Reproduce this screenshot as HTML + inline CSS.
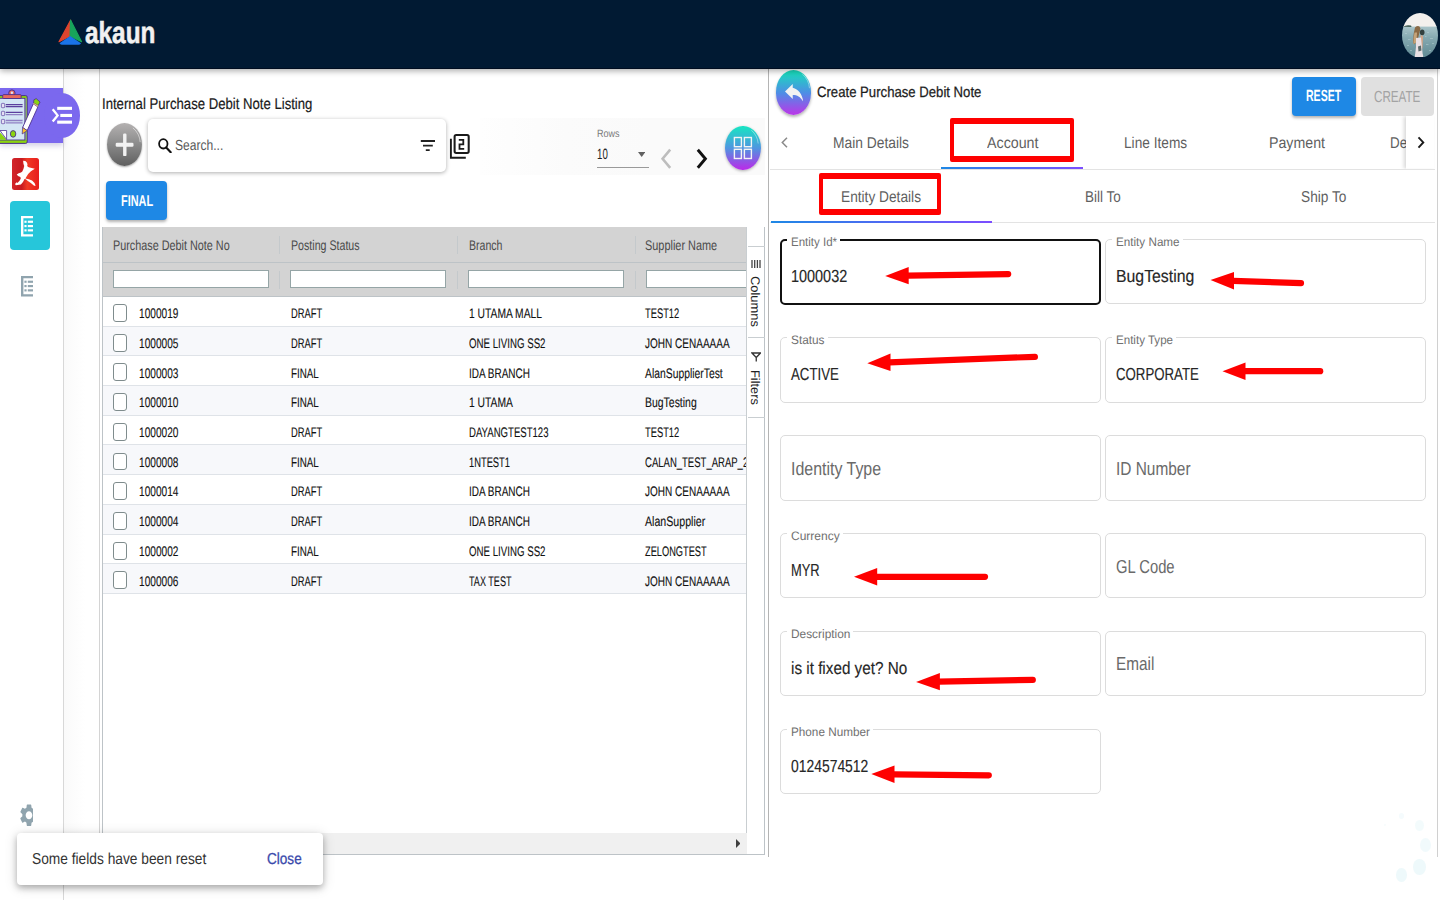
<!DOCTYPE html>
<html lang="en"><head><meta charset="utf-8"><title>Create Purchase Debit Note</title>
<style>
html,body{margin:0;padding:0;}
body{width:1440px;height:900px;overflow:hidden;position:relative;background:#fff;font-family:"Liberation Sans",sans-serif;}
body div,body svg,body span{position:absolute;display:block;}
.t{white-space:nowrap;line-height:1;transform-origin:0 0;text-rendering:geometricPrecision;}
.v{white-space:nowrap;line-height:1;transform-origin:0 0;text-rendering:geometricPrecision;}
</style></head>
<body>
<div style="left:0px;top:68px;width:63px;height:832px;background:#fff;border-right:1px solid #d8d8d8;"></div>
<div style="left:64px;top:68px;width:35px;height:787px;background:linear-gradient(90deg,#fafafa,#fff 60%);border-right:1px solid #d4d4d4;"></div>
<div style="left:0px;top:88.3px;width:63px;height:55px;background:#7b68ee;box-shadow:0 3px 5px rgba(90,80,160,.25);"></div>
<div style="left:44px;top:93.3px;width:36px;height:44.7px;background:#7b68ee;border-radius:50%;"></div>
<svg style="left:50px;top:105px;" width="24" height="21" viewBox="50 105 24 21" preserveAspectRatio="none"><g fill="#fff"><rect x="57.200" y="106.800" width="14.800" height="3.100"/><rect x="60.300" y="113.900" width="11.700" height="3.100"/><rect x="57.200" y="120.600" width="14.800" height="3.100"/></g><path d="M52.700 109.300 L57.600 115.400 L52.700 121.500" fill="none" stroke="#fff" stroke-width="2.300"/></svg>
<svg style="left:0px;top:88px;" width="42" height="56" viewBox="0 88 42 56" preserveAspectRatio="none"><rect x="-3" y="95.600" width="30.200" height="47.800" rx="1.500" fill="#8bd40f" stroke="#4b2e91" stroke-width="1"/><rect x="24.600" y="98" width="1.900" height="42" fill="#8fb08f"/><rect x="-3" y="98.300" width="27.900" height="41.700" fill="#d4e6f5" stroke="#4b2e91" stroke-width=".9"/><circle cx="11.900" cy="93.100" r="3.200" fill="#e8695d" stroke="#4b2e91" stroke-width="1"/><circle cx="11.900" cy="92.800" r="1.200" fill="#dfe3f3"/><rect x="2.700" y="94.600" width="18.500" height="3.900" rx="1" fill="#e8695d" stroke="#4b2e91" stroke-width=".9"/><g stroke="#5b3f9e" stroke-width="1.300"><path d="M5.800 104.700H22.600M5.800 106.700H22.600M5.800 112.300H22.600"/></g><g stroke="#8f80c4" stroke-width="1.300"><path d="M5.800 114.700H22.600M5.800 120.500H22.600M5.800 122.800H22.600"/></g><g fill="#e4e0f4" stroke="#6a52a8" stroke-width=".8"><rect x="1.400" y="103.400" width="3.300" height="4.300" rx=".8"/><rect x="1.400" y="111.300" width="3.300" height="4.300" rx=".8"/><rect x="1.400" y="119.400" width="3.300" height="4.300" rx=".8"/></g><ellipse cx="13.100" cy="133.900" rx="2.700" ry="3.300" fill="#8bd40f" stroke="#4b2e91" stroke-width=".9"/><path d="M-1 131.500 L6.600 139.700 L-1 139.700Z" fill="#8bd40f"/><path d="M0 130.500 L6.600 130.500 L6.600 139.500Z" fill="#fff" stroke="#4b2e91" stroke-width=".8"/><path d="M33.300 103.800 L37.900 106.900 L27.200 130.600 L22.600 127.500Z" fill="#fff" stroke="#4b2e91" stroke-width=".9"/><path d="M33.900 99.800 L36.200 98.600 L40.100 102 L38.100 105.700 L33.600 103Z" fill="#8bd40f" stroke="#4b2e91" stroke-width=".8"/><path d="M33.400 103.400 L38 106.300" stroke="#f0c070" stroke-width="1.100"/><path d="M22.600 127.500 L27.200 130.600 L22.200 134Z" fill="#fbc02d" stroke="#4b2e91" stroke-width=".7"/></svg>
<div style="left:11.9px;top:158.4px;width:27px;height:31.9px;background:linear-gradient(90deg,#d3252b 0,#c71a20 36%,#ef3a25 56%,#e81c1c 100%);border-radius:2.500px;"></div>
<svg style="left:11.9px;top:158.4px;" width="27" height="31.9" viewBox="215 152 485 573" preserveAspectRatio="none"><path fill="#fff" d="M415 200 L455 205 Q490 225 493 265 L488 295 Q500 318 530 322 L625 345 Q590 370 555 392 Q510 430 480 480 L455 522 Q520 528 575 555 Q625 590 640 652 L612 652 Q560 600 500 565 L462 535 L440 530 Q420 585 375 628 L285 640 Q265 630 275 608 L300 588 L312 602 Q345 580 372 525 L366 492 L332 480 Q305 465 300 450 L335 428 Q385 415 400 395 Q425 350 435 295 Q425 270 420 250 Z"/></svg>
<div style="left:9.6px;top:201px;width:40px;height:49px;background:#26c6da;border-radius:4px;"></div>
<svg style="left:21px;top:216px;" width="12.4" height="20.6" viewBox="0 0 12.4 22" preserveAspectRatio="none"><path d="M12.4 1.2H1.2V20.8H12.4" fill="none" stroke="#fff" stroke-width="2.4"/><g fill="#fff"><rect x="3.4" y="5" width="2.2" height="2.3"/><rect x="3.4" y="9.600" width="2.200" height="2.300"/><rect x="3.400" y="14.200" width="2.200" height="2.300"/><rect x="6.800" y="5" width="5.600" height="2.300"/><rect x="6.800" y="9.600" width="5.600" height="2.300"/><rect x="6.800" y="14.200" width="5.600" height="2.300"/></g></svg>
<svg style="left:21px;top:276px;" width="12.4" height="20.6" viewBox="0 0 12.4 22" preserveAspectRatio="none"><path d="M12.4 1.2H1.2V20.8H12.4" fill="none" stroke="#90a4ae" stroke-width="2.4"/><g fill="#90a4ae"><rect x="3.4" y="5" width="2.2" height="2.3"/><rect x="3.4" y="9.600" width="2.200" height="2.300"/><rect x="3.400" y="14.200" width="2.200" height="2.300"/><rect x="6.800" y="5" width="5.600" height="2.300"/><rect x="6.800" y="9.600" width="5.600" height="2.300"/><rect x="6.800" y="14.200" width="5.600" height="2.300"/></g></svg>
<svg style="left:19.7px;top:804px;" width="13.3" height="22.4" viewBox="2.300 2 14.330 20" preserveAspectRatio="none"><path fill="#90a4ae" d="M19.14 12.94c.04-.3.06-.61.06-.94 0-.32-.02-.64-.07-.94l2.030-1.580c.180-.140.230-.410.120-.610l-1.920-3.320c-.120-.220-.370-.290-.590-.220l-2.390.960c-.5-.380-1.030-.700-1.620-.940l-.360-2.540c-.040-.240-.240-.410-.480-.410h-3.840c-.240 0-.430.170-.470.410l-.360 2.540c-.590.240-1.130.570-1.620.940l-2.390-.960c-.220-.080-.470 0-.590.220L2.740 8.870c-.120.210-.080.470.120.610l2.030 1.580c-.050.300-.090.630-.090.940s.020.640.070.940l-2.030 1.580c-.180.140-.230.410-.120.610l1.920 3.320c.120.220.370.290.590.220l2.390-.960c.5.380 1.030.700 1.620.940l.360 2.540c.050.240.240.410.480.410h3.840c.240 0 .440-.170.470-.410l.360-2.540c.590-.240 1.130-.560 1.620-.940l2.390.960c.220.080.470 0 .590-.220l1.920-3.320c.120-.220.070-.470-.120-.610l-2.010-1.580zM12 15.600c-1.980 0-3.600-1.620-3.600-3.600s1.620-3.600 3.600-3.600 3.600 1.620 3.600 3.600-1.620 3.600-3.600 3.600z"/></svg>
<span class="t" id="t0" style="left:101.8px;top:97px;font-size:15.6px;color:#1a1a1a;font-weight:400;transform:scaleX(0.8428);-webkit-text-stroke:.2px #1a1a1a;">Internal Purchase Debit Note Listing</span>
<div style="left:106.6px;top:122.9px;width:35.4px;height:43.5px;border-radius:50%;background:linear-gradient(180deg,#b4b1b1,#8e8e8e 45%,#5f5f5f);box-shadow:0 1px 2px rgba(0,0,0,.35);"></div>
<svg style="left:106.6px;top:122.9px;" width="35.4" height="43.5" viewBox="106.600 122.900 35.400 43.500" preserveAspectRatio="none"><path d="M132.500 127.800 Q139.300 133.500 139.800 142" fill="none" stroke="rgba(255,255,255,.55)" stroke-width=".9"/><rect x="122.700" y="133.400" width="3.400" height="22.600" rx="1.200" fill="#f2f2f2"/><rect x="115.300" y="142.700" width="17.800" height="4" rx="1.300" fill="#f2f2f2"/></svg>
<div style="left:148px;top:118.5px;width:298px;height:53px;background:#fff;border-radius:5px;box-shadow:0 1px 4px rgba(0,0,0,.32);"></div>
<svg style="left:158.3px;top:138px;" width="13.6" height="15" viewBox="0 0 13.6 15" preserveAspectRatio="none"><ellipse cx="5.3" cy="5.8" rx="4.2" ry="4.700" fill="none" stroke="#111" stroke-width="1.800"/><path d="M8.200 9.500 L12.700 14.200" stroke="#111" stroke-width="2.100" stroke-linecap="round"/></svg>
<span class="t" id="t1" style="left:174.6px;top:139px;font-size:14.6px;color:#5a5a5a;font-weight:400;transform:scaleX(0.8270);">Search...</span>
<svg style="left:419px;top:138px;" width="18" height="15" viewBox="419 138 18 15" preserveAspectRatio="none"><path d="M420.800 141H435M423 145.650H432.800M425.800 150.150H429.700" stroke="#222" stroke-width="1.800"/></svg>
<svg style="left:448px;top:132px;" width="24" height="28" viewBox="448 132 24 28" preserveAspectRatio="none"><path d="M450.900 138.700V157.750H465.800" fill="none" stroke="#1a1a1a" stroke-width="1.900"/><rect x="454.600" y="135.050" width="14.100" height="17.900" rx="1.600" fill="none" stroke="#1a1a1a" stroke-width="2.050"/><path d="M458.800 139.900H463.300V144.400H459.500V148.900H464.200" fill="none" stroke="#1a1a1a" stroke-width="1.800"/></svg>
<div style="left:480px;top:118px;width:285.4px;height:56.8px;background:linear-gradient(90deg,#fefefe 0,#fbfbfb 30%,#fafafa 60%);"></div>
<span class="t" id="t2" style="left:597.4px;top:129px;font-size:10.5px;color:#7a7a7a;font-weight:400;transform:scaleX(0.8604);">Rows</span>
<span class="t" id="t3" style="left:597.4px;top:148px;font-size:14.9px;color:#222;font-weight:400;transform:scaleX(0.6515);">10</span>
<svg style="left:638px;top:151.9px;" width="7.4" height="4.9" viewBox="0 0 8 4" preserveAspectRatio="none"><path d="M0 0H8L4 4Z" fill="#616161"/></svg>
<div style="left:597.2px;top:167.4px;width:51.6px;height:1px;background:#9a9a9a;"></div>
<svg style="left:660.3px;top:147.7px;" width="12" height="21.5" viewBox="0 0 12 21.500" preserveAspectRatio="none"><path d="M10.200 1.700 L2.600 10.750 L10.200 19.800" fill="none" stroke="#bdbdbd" stroke-width="2.600"/></svg>
<svg style="left:696.4px;top:147.7px;" width="12" height="21.5" viewBox="0 0 12 21.500" preserveAspectRatio="none"><path d="M1.800 1.700 L9.400 10.750 L1.800 19.800" fill="none" stroke="#111" stroke-width="2.900"/></svg>
<div style="left:725.1px;top:125.5px;width:35.5px;height:44.1px;border-radius:50%;background:linear-gradient(180deg,#1be0c4 4%,#4f96e0 50%,#b431e8 96%);box-shadow:0 1px 3px rgba(0,0,0,.3);"></div>
<svg style="left:725.1px;top:125.5px;" width="35.5" height="44.1" viewBox="725.100 125.500 35.500 44.100" preserveAspectRatio="none"><path d="M751.500 129.700 Q757.500 135 758.300 143" fill="none" stroke="rgba(255,255,255,.5)" stroke-width=".8"/><g fill="none" stroke="#f4f4f4" stroke-width="1.400"><rect x="734.500" y="137" width="7" height="9.200"/><rect x="744.500" y="137" width="7" height="9.200"/><rect x="734.500" y="148.800" width="7" height="9.200"/><rect x="744.500" y="148.800" width="7" height="9.200"/></g></svg>
<div style="left:106px;top:181.2px;width:61.1px;height:39.3px;background:#1e88e5;border-radius:4px;box-shadow:0 2px 3px rgba(0,0,0,.3);"></div>
<span class="t" id="t4" style="left:120.7px;top:194px;font-size:15.6px;color:#fff;font-weight:700;transform:scaleX(0.6993);">FINAL</span>
<div style="left:102px;top:226.5px;width:663px;height:628px;border:1px solid #bdc3c7;box-sizing:border-box;background:#fff;"></div>
<div style="left:103px;top:227px;width:644px;height:69.8px;background:#d3d3d3;border-bottom:1px solid #bdc3c7;box-sizing:border-box;"></div>
<div style="left:103px;top:262px;width:644px;height:1px;background:#bdc3c7;"></div>
<span class="t" id="t5" style="left:113.3px;top:238px;font-size:14px;color:#4a4a4a;font-weight:400;transform:scaleX(0.7730);">Purchase Debit Note No</span>
<span class="t" id="t6" style="left:290.7px;top:238px;font-size:14px;color:#4a4a4a;font-weight:400;transform:scaleX(0.7598);">Posting Status</span>
<span class="t" id="t7" style="left:468.5px;top:238px;font-size:14px;color:#4a4a4a;font-weight:400;transform:scaleX(0.7552);">Branch</span>
<span class="t" id="t8" style="left:645.3px;top:238px;font-size:14px;color:#4a4a4a;font-weight:400;transform:scaleX(0.7796);">Supplier Name</span>
<div style="left:279.2px;top:236px;width:1px;height:17.5px;background:#c4c9cc;"></div>
<div style="left:279.2px;top:271px;width:1px;height:17.5px;background:#c4c9cc;"></div>
<div style="left:457.3px;top:236px;width:1px;height:17.5px;background:#c4c9cc;"></div>
<div style="left:457.3px;top:271px;width:1px;height:17.5px;background:#c4c9cc;"></div>
<div style="left:634.7px;top:236px;width:1px;height:17.5px;background:#c4c9cc;"></div>
<div style="left:634.7px;top:271px;width:1px;height:17.5px;background:#c4c9cc;"></div>
<div style="left:112.8px;top:269.800px;width:156px;height:17.800px;background:#fff;border:1px solid #95a5a6;box-sizing:border-box;"></div>
<div style="left:290.3px;top:269.800px;width:156px;height:17.800px;background:#fff;border:1px solid #95a5a6;box-sizing:border-box;"></div>
<div style="left:468px;top:269.800px;width:156px;height:17.800px;background:#fff;border:1px solid #95a5a6;box-sizing:border-box;"></div>
<div style="left:645.5px;top:269.800px;width:101.2px;height:17.800px;background:#fff;border:1px solid #95a5a6;box-sizing:border-box;border-right:0;"></div>
<div style="left:103px;top:296.8px;width:644px;height:29.72px;background:#fff;border-bottom:1px solid #dfe3e8;box-sizing:border-box;"></div>
<div style="left:112.8px;top:304px;width:14.7px;height:17.9px;border:1.300px solid #7f8c8d;border-radius:3px;box-sizing:border-box;background:#fff;"></div>
<span class="t" id="t9" style="left:138.7px;top:307px;font-size:13.8px;color:#121212;font-weight:400;transform:scaleX(0.7334);-webkit-text-stroke:.12px #121212;">1000019</span>
<span class="t" id="t10" style="left:290.7px;top:307px;font-size:13.8px;color:#121212;font-weight:400;transform:scaleX(0.6783);-webkit-text-stroke:.12px #121212;">DRAFT</span>
<span class="t" id="t11" style="left:468.5px;top:307px;font-size:13.8px;color:#121212;font-weight:400;transform:scaleX(0.7457);-webkit-text-stroke:.12px #121212;">1 UTAMA MALL</span>
<span class="t" id="t12" style="left:645.3px;top:307px;font-size:13.8px;color:#121212;font-weight:400;transform:scaleX(0.6758);-webkit-text-stroke:.12px #121212;">TEST12</span>
<div style="left:103px;top:326.52px;width:644px;height:29.72px;background:#f7f8fb;border-bottom:1px solid #dfe3e8;box-sizing:border-box;"></div>
<div style="left:112.8px;top:333.72px;width:14.7px;height:17.9px;border:1.300px solid #7f8c8d;border-radius:3px;box-sizing:border-box;background:#fff;"></div>
<span class="t" id="t13" style="left:138.7px;top:337px;font-size:13.8px;color:#121212;font-weight:400;transform:scaleX(0.7334);-webkit-text-stroke:.12px #121212;">1000005</span>
<span class="t" id="t14" style="left:290.7px;top:337px;font-size:13.8px;color:#121212;font-weight:400;transform:scaleX(0.6783);-webkit-text-stroke:.12px #121212;">DRAFT</span>
<span class="t" id="t15" style="left:468.5px;top:337px;font-size:13.8px;color:#121212;font-weight:400;transform:scaleX(0.7025);-webkit-text-stroke:.12px #121212;">ONE LIVING SS2</span>
<span class="t" id="t16" style="left:645.3px;top:337px;font-size:13.8px;color:#121212;font-weight:400;transform:scaleX(0.7267);-webkit-text-stroke:.12px #121212;">JOHN CENAAAAA</span>
<div style="left:103px;top:356.24px;width:644px;height:29.72px;background:#fff;border-bottom:1px solid #dfe3e8;box-sizing:border-box;"></div>
<div style="left:112.8px;top:363.44px;width:14.7px;height:17.9px;border:1.300px solid #7f8c8d;border-radius:3px;box-sizing:border-box;background:#fff;"></div>
<span class="t" id="t17" style="left:138.7px;top:367px;font-size:13.8px;color:#121212;font-weight:400;transform:scaleX(0.7334);-webkit-text-stroke:.12px #121212;">1000003</span>
<span class="t" id="t18" style="left:290.7px;top:367px;font-size:13.8px;color:#121212;font-weight:400;transform:scaleX(0.7108);-webkit-text-stroke:.12px #121212;">FINAL</span>
<span class="t" id="t19" style="left:468.5px;top:367px;font-size:13.8px;color:#121212;font-weight:400;transform:scaleX(0.7232);-webkit-text-stroke:.12px #121212;">IDA BRANCH</span>
<span class="t" id="t20" style="left:645.3px;top:367px;font-size:13.8px;color:#121212;font-weight:400;transform:scaleX(0.7504);-webkit-text-stroke:.12px #121212;">AlanSupplierTest</span>
<div style="left:103px;top:385.96px;width:644px;height:29.72px;background:#f7f8fb;border-bottom:1px solid #dfe3e8;box-sizing:border-box;"></div>
<div style="left:112.8px;top:393.16px;width:14.7px;height:17.9px;border:1.300px solid #7f8c8d;border-radius:3px;box-sizing:border-box;background:#fff;"></div>
<span class="t" id="t21" style="left:138.7px;top:396px;font-size:13.8px;color:#121212;font-weight:400;transform:scaleX(0.7334);-webkit-text-stroke:.12px #121212;">1000010</span>
<span class="t" id="t22" style="left:290.7px;top:396px;font-size:13.8px;color:#121212;font-weight:400;transform:scaleX(0.7108);-webkit-text-stroke:.12px #121212;">FINAL</span>
<span class="t" id="t23" style="left:468.5px;top:396px;font-size:13.8px;color:#121212;font-weight:400;transform:scaleX(0.7485);-webkit-text-stroke:.12px #121212;">1 UTAMA</span>
<span class="t" id="t24" style="left:645.3px;top:396px;font-size:13.8px;color:#121212;font-weight:400;transform:scaleX(0.7573);-webkit-text-stroke:.12px #121212;">BugTesting</span>
<div style="left:103px;top:415.68px;width:644px;height:29.72px;background:#fff;border-bottom:1px solid #dfe3e8;box-sizing:border-box;"></div>
<div style="left:112.8px;top:422.88px;width:14.7px;height:17.9px;border:1.300px solid #7f8c8d;border-radius:3px;box-sizing:border-box;background:#fff;"></div>
<span class="t" id="t25" style="left:138.7px;top:426px;font-size:13.8px;color:#121212;font-weight:400;transform:scaleX(0.7334);-webkit-text-stroke:.12px #121212;">1000020</span>
<span class="t" id="t26" style="left:290.7px;top:426px;font-size:13.8px;color:#121212;font-weight:400;transform:scaleX(0.6783);-webkit-text-stroke:.12px #121212;">DRAFT</span>
<span class="t" id="t27" style="left:468.5px;top:426px;font-size:13.8px;color:#121212;font-weight:400;transform:scaleX(0.6943);-webkit-text-stroke:.12px #121212;">DAYANGTEST123</span>
<span class="t" id="t28" style="left:645.3px;top:426px;font-size:13.8px;color:#121212;font-weight:400;transform:scaleX(0.6758);-webkit-text-stroke:.12px #121212;">TEST12</span>
<div style="left:103px;top:445.4px;width:644px;height:29.72px;background:#f7f8fb;border-bottom:1px solid #dfe3e8;box-sizing:border-box;"></div>
<div style="left:112.8px;top:452.6px;width:14.7px;height:17.9px;border:1.300px solid #7f8c8d;border-radius:3px;box-sizing:border-box;background:#fff;"></div>
<span class="t" id="t29" style="left:138.7px;top:456px;font-size:13.8px;color:#121212;font-weight:400;transform:scaleX(0.7334);-webkit-text-stroke:.12px #121212;">1000008</span>
<span class="t" id="t30" style="left:290.7px;top:456px;font-size:13.8px;color:#121212;font-weight:400;transform:scaleX(0.7108);-webkit-text-stroke:.12px #121212;">FINAL</span>
<span class="t" id="t31" style="left:468.5px;top:456px;font-size:13.8px;color:#121212;font-weight:400;transform:scaleX(0.6768);-webkit-text-stroke:.12px #121212;">1NTEST1</span>
<span class="t" id="t32" style="left:645.3px;top:456px;font-size:13.8px;color:#121212;font-weight:400;transform:scaleX(0.6902);-webkit-text-stroke:.12px #121212;">CALAN_TEST_ARAP_2</span>
<div style="left:103px;top:475.12px;width:644px;height:29.72px;background:#fff;border-bottom:1px solid #dfe3e8;box-sizing:border-box;"></div>
<div style="left:112.8px;top:482.32px;width:14.7px;height:17.9px;border:1.300px solid #7f8c8d;border-radius:3px;box-sizing:border-box;background:#fff;"></div>
<span class="t" id="t33" style="left:138.7px;top:485px;font-size:13.8px;color:#121212;font-weight:400;transform:scaleX(0.7334);-webkit-text-stroke:.12px #121212;">1000014</span>
<span class="t" id="t34" style="left:290.7px;top:485px;font-size:13.8px;color:#121212;font-weight:400;transform:scaleX(0.6783);-webkit-text-stroke:.12px #121212;">DRAFT</span>
<span class="t" id="t35" style="left:468.5px;top:485px;font-size:13.8px;color:#121212;font-weight:400;transform:scaleX(0.7232);-webkit-text-stroke:.12px #121212;">IDA BRANCH</span>
<span class="t" id="t36" style="left:645.3px;top:485px;font-size:13.8px;color:#121212;font-weight:400;transform:scaleX(0.7267);-webkit-text-stroke:.12px #121212;">JOHN CENAAAAA</span>
<div style="left:103px;top:504.84px;width:644px;height:29.72px;background:#f7f8fb;border-bottom:1px solid #dfe3e8;box-sizing:border-box;"></div>
<div style="left:112.8px;top:512.04px;width:14.7px;height:17.9px;border:1.300px solid #7f8c8d;border-radius:3px;box-sizing:border-box;background:#fff;"></div>
<span class="t" id="t37" style="left:138.7px;top:515px;font-size:13.8px;color:#121212;font-weight:400;transform:scaleX(0.7334);-webkit-text-stroke:.12px #121212;">1000004</span>
<span class="t" id="t38" style="left:290.7px;top:515px;font-size:13.8px;color:#121212;font-weight:400;transform:scaleX(0.6783);-webkit-text-stroke:.12px #121212;">DRAFT</span>
<span class="t" id="t39" style="left:468.5px;top:515px;font-size:13.8px;color:#121212;font-weight:400;transform:scaleX(0.7232);-webkit-text-stroke:.12px #121212;">IDA BRANCH</span>
<span class="t" id="t40" style="left:645.3px;top:515px;font-size:13.8px;color:#121212;font-weight:400;transform:scaleX(0.7695);-webkit-text-stroke:.12px #121212;">AlanSupplier</span>
<div style="left:103px;top:534.56px;width:644px;height:29.72px;background:#fff;border-bottom:1px solid #dfe3e8;box-sizing:border-box;"></div>
<div style="left:112.8px;top:541.76px;width:14.7px;height:17.9px;border:1.300px solid #7f8c8d;border-radius:3px;box-sizing:border-box;background:#fff;"></div>
<span class="t" id="t41" style="left:138.7px;top:545px;font-size:13.8px;color:#121212;font-weight:400;transform:scaleX(0.7334);-webkit-text-stroke:.12px #121212;">1000002</span>
<span class="t" id="t42" style="left:290.7px;top:545px;font-size:13.8px;color:#121212;font-weight:400;transform:scaleX(0.7108);-webkit-text-stroke:.12px #121212;">FINAL</span>
<span class="t" id="t43" style="left:468.5px;top:545px;font-size:13.8px;color:#121212;font-weight:400;transform:scaleX(0.7025);-webkit-text-stroke:.12px #121212;">ONE LIVING SS2</span>
<span class="t" id="t44" style="left:645.3px;top:545px;font-size:13.8px;color:#121212;font-weight:400;transform:scaleX(0.6707);-webkit-text-stroke:.12px #121212;">ZELONGTEST</span>
<div style="left:103px;top:564.28px;width:644px;height:29.72px;background:#f7f8fb;border-bottom:1px solid #dfe3e8;box-sizing:border-box;"></div>
<div style="left:112.8px;top:571.48px;width:14.7px;height:17.9px;border:1.300px solid #7f8c8d;border-radius:3px;box-sizing:border-box;background:#fff;"></div>
<span class="t" id="t45" style="left:138.7px;top:575px;font-size:13.8px;color:#121212;font-weight:400;transform:scaleX(0.7334);-webkit-text-stroke:.12px #121212;">1000006</span>
<span class="t" id="t46" style="left:290.7px;top:575px;font-size:13.8px;color:#121212;font-weight:400;transform:scaleX(0.6783);-webkit-text-stroke:.12px #121212;">DRAFT</span>
<span class="t" id="t47" style="left:468.5px;top:575px;font-size:13.8px;color:#121212;font-weight:400;transform:scaleX(0.6573);-webkit-text-stroke:.12px #121212;">TAX TEST</span>
<span class="t" id="t48" style="left:645.3px;top:575px;font-size:13.8px;color:#121212;font-weight:400;transform:scaleX(0.7267);-webkit-text-stroke:.12px #121212;">JOHN CENAAAAA</span>
<div style="left:746.7px;top:227.3px;width:17.3px;height:626px;background:#fff;"></div>
<div style="left:746.2px;top:227.3px;width:1px;height:626px;background:#c9ced1;"></div>
<div style="left:747.5px;top:245.6px;width:17px;height:1px;background:#c9ced1;"></div>
<div style="left:747.5px;top:336.7px;width:17px;height:1px;background:#c9ced1;"></div>
<div style="left:747.5px;top:416.7px;width:17px;height:1px;background:#c9ced1;"></div>
<svg style="left:751px;top:259.6px;" width="10" height="8.2" viewBox="0 0 10 8" preserveAspectRatio="none"><path d="M1 0V8M3.700 0V8M6.400 0V8M9 0V8" stroke="#444" stroke-width="1.300"/></svg>
<svg style="left:750.5px;top:352px;" width="10.5" height="10" viewBox="0 0 10.500 10" preserveAspectRatio="none"><path d="M1 1H9.500L5.250 5.500Z M5.250 5.500V9.500" fill="none" stroke="#333" stroke-width="1.300"/></svg>
<span class="v" id="vc" style="left:761.100px;top:275.800px;font-size:13.400px;color:#222;transform:rotate(90deg) scale(0.9642,.93);">Columns</span>
<span class="v" id="vf" style="left:761.100px;top:369.800px;font-size:13.400px;color:#222;transform:rotate(90deg) scale(0.9556,.93);">Filters</span>
<div style="left:103px;top:833px;width:644px;height:20.5px;background:#f0f0f0;"></div>
<svg style="left:735.5px;top:839px;" width="4.5" height="9" viewBox="0 0 4.500 9" preserveAspectRatio="none"><path d="M0 0L4.500 4.500L0 9Z" fill="#404040"/></svg>
<div style="left:768px;top:68px;width:1.3px;height:789px;background:#b4b4b4;"></div>
<div style="left:17.1px;top:832.6px;width:306px;height:52.2px;background:#fff;border-radius:4px;box-shadow:0 3px 6px rgba(0,0,0,.26),0 2px 14px rgba(0,0,0,.14);z-index:5;"></div>
<span class="t" id="t49" style="left:31.6px;top:852px;font-size:15.9px;color:#333;font-weight:400;transform:scaleX(0.8654);z-index:6;">Some fields have been reset</span>
<span class="t" id="t50" style="left:266.5px;top:852px;font-size:15.9px;color:#3949ab;font-weight:500;transform:scaleX(0.8538);z-index:6;-webkit-text-stroke:.3px #3949ab;">Close</span>
<div style="left:0px;top:0px;width:1440px;height:68.5px;background:#011a33;border-bottom:1px solid #000d20;box-sizing:border-box;box-shadow:0 2px 6px rgba(0,0,0,.33);z-index:3;"></div>
<svg style="left:58.200px;top:18.600px;z-index:4" width="24.600" height="26.800" viewBox="0 0 24 26" preserveAspectRatio="none"><path d="M12.300 1.200 L1 22 L11.800 16.400 Z" fill="#e0442e" stroke="#e0442e" stroke-width="1.200" stroke-linejoin="round"/><path d="M12.300 1.200 L23 22 L11.800 16.400 Z" fill="#18a45b" stroke="#18a45b" stroke-width="1.200" stroke-linejoin="round"/><path d="M11.800 16.400 L1.500 23.500 Q2.500 25 4 25 L20 25 Q21.500 25 22.500 23.500 Z" fill="#1a73e8"/></svg>
<span class="t" id="t51" style="left:84.6px;top:18px;font-size:30.5px;color:#f1f1f1;font-weight:700;transform:scaleX(0.7986);z-index:4;-webkit-text-stroke:.55px #f1f1f1;">akaun</span>
<svg style="left:1402px;top:12.600px;z-index:4" width="36" height="44.800" viewBox="0 0 36 44.800"><defs><clipPath id="avc"><ellipse cx="18" cy="22.400" rx="18" ry="22.400"/></clipPath><linearGradient id="sea" x1="0" y1="0" x2="0" y2="1"><stop offset="0" stop-color="#a9c4c9"/><stop offset=".35" stop-color="#86a9b1"/><stop offset="1" stop-color="#5d8791"/></linearGradient></defs><g clip-path="url(#avc)"><rect width="36" height="14" fill="#f3f0ed"/><rect y="13.600" width="36" height="32" fill="url(#sea)"/><path d="M1 13.800 Q4 11.600 9 12.600 L9.600 13.900 Z" fill="#3c5a52"/><g transform="translate(0,-2.600)"><path d="M13 17 Q11.500 22 11 30 Q10.800 33 12.500 34 L16 28 L18.500 18 Q17 13.600 13 17Z" fill="#8a6a45"/><path d="M12.500 22 Q11 28 11.500 33.500 L14.500 32 L15 22Z" fill="#c6a47a"/><ellipse cx="20.200" cy="22" rx="2.300" ry="2.800" fill="#34403f"/><path d="M18.500 25 Q21.500 24 21 28 L20.500 38 L18.500 38Z" fill="#d2a488"/><path d="M14 27.500 L19 27 L20.800 45 L13 45 Q14.500 36 14 27.500Z" fill="#e9e0e4"/><path d="M16 36 L19 35 L19.500 40 L16.500 41Z" fill="#5c6a6a"/><path d="M13 44 L21 44 L21.500 50 L12.500 50Z" fill="#e9e0e4"/></g><g fill="#c4dadd" opacity=".7"><rect x="3" y="20" width="2" height=".6"/><rect x="6" y="26" width="2.500" height=".6"/><rect x="25" y="19" width="2" height=".6"/><rect x="28" y="25" width="3" height=".6"/><rect x="24" y="31" width="2.500" height=".6"/><rect x="5" y="32" width="2" height=".6"/><rect x="27" y="37" width="2" height=".6"/><rect x="8" y="37" width="2" height=".6"/><rect x="23" y="23" width="1.500" height=".6"/><rect x="30" y="30" width="2" height=".6"/></g></g></svg>
<div style="left:775.5px;top:70.3px;width:35.7px;height:44.5px;border-radius:50%;background:linear-gradient(180deg,#1bd8be 6%,#4f8ce6 52%,#b43ce8 96%);box-shadow:0 2px 3px rgba(0,0,0,.3);"></div>
<svg style="left:775.5px;top:70.3px;" width="35.7" height="44.5" viewBox="775.500 70.300 35.700 44.500" preserveAspectRatio="none"><path d="M802 74.600 Q808.300 80 809 88.500" fill="none" stroke="rgba(255,255,255,.5)" stroke-width=".8"/></svg>
<svg style="left:784.6px;top:83.6px;" width="18.6" height="18.6" viewBox="0 0 24 20" preserveAspectRatio="none"><path d="M10 4V0L0 8l10 8v-4.300c6 0 10 2 13.500 7.300C22.500 12 18 5.500 10 4z" fill="#f2f2f2"/></svg>
<span class="t" id="t52" style="left:816.9px;top:85px;font-size:15px;color:#1c1c1c;font-weight:500;transform:scaleX(0.8763);-webkit-text-stroke:.25px #1c1c1c;">Create Purchase Debit Note</span>
<div style="left:1292px;top:76.5px;width:63.5px;height:39px;background:#1e88e5;border-radius:4px;box-shadow:0 2px 3px rgba(0,0,0,.3);"></div>
<span class="t" id="t53" style="left:1306.1px;top:88px;font-size:16.2px;color:#fff;font-weight:700;transform:scaleX(0.6520);">RESET</span>
<div style="left:1360.5px;top:76.5px;width:73.6px;height:39px;background:#e0e0e0;border-radius:4px;"></div>
<span class="t" id="t54" style="left:1374.1px;top:90px;font-size:16px;color:#a3a3a3;font-weight:500;transform:scaleX(0.7282);">CREATE</span>
<svg style="left:781.3px;top:137.3px;" width="7" height="11" viewBox="0 0 7 11" preserveAspectRatio="none"><path d="M6 .8 L1.300 5.500 L6 10.200" fill="none" stroke="#8a8a8a" stroke-width="1.500"/></svg>
<span class="t" id="t55" style="left:832.5px;top:136px;font-size:15.7px;color:#5f5f5f;font-weight:400;transform:scaleX(0.8805);">Main Details</span>
<span class="t" id="t56" style="left:987.2px;top:136px;font-size:15.7px;color:#5f5f5f;font-weight:400;transform:scaleX(0.9085);">Account</span>
<span class="t" id="t57" style="left:1123.5px;top:136px;font-size:15.7px;color:#5f5f5f;font-weight:400;transform:scaleX(0.8732);">Line Items</span>
<span class="t" id="t58" style="left:1269.3px;top:136px;font-size:15.7px;color:#5f5f5f;font-weight:400;transform:scaleX(0.9044);">Payment</span>
<span class="t" id="t59" style="left:1389.5px;top:136px;font-size:15.7px;color:#5f5f5f;font-weight:400;transform:scaleX(0.8523);">De</span>
<div style="left:1405.5px;top:116px;width:29px;height:52.7px;background:#fff;box-shadow:-2px 0 4px rgba(0,0,0,.16);clip-path:inset(0 0 0 -8px);"></div>
<svg style="left:1417px;top:136px;" width="8.4" height="13" viewBox="1417 136 8.400 13" preserveAspectRatio="none"><path d="M1418.500 137.300 L1423.300 142.450 L1418.500 147.600" fill="none" stroke="#1a1a1a" stroke-width="1.900"/></svg>
<div style="left:770px;top:168.7px;width:664.5px;height:1px;background:#e3e3e3;"></div>
<div style="left:941.1px;top:166.8px;width:142.2px;height:2px;background:linear-gradient(90deg,#1e88e5,#7c4dff);"></div>
<div style="left:950.2px;top:117.8px;width:124px;height:43.9px;border:solid #fe0000;border-width:6.200px 4.700px;border-radius:2px;box-sizing:border-box;z-index:4;"></div>
<span class="t" id="t60" style="left:841.3px;top:190px;font-size:15.7px;color:#5f5f5f;font-weight:400;transform:scaleX(0.8739);">Entity Details</span>
<span class="t" id="t61" style="left:1084.8px;top:190px;font-size:15.7px;color:#5f5f5f;font-weight:400;transform:scaleX(0.8589);">Bill To</span>
<span class="t" id="t62" style="left:1301.3px;top:190px;font-size:15.7px;color:#5f5f5f;font-weight:400;transform:scaleX(0.8723);">Ship To</span>
<div style="left:770px;top:222.2px;width:664.5px;height:1px;background:#e3e3e3;"></div>
<div style="left:770.7px;top:220.7px;width:221.3px;height:2px;background:linear-gradient(90deg,#1e88e5,#7c4dff);"></div>
<div style="left:818.7px;top:172.8px;width:122.4px;height:42.4px;border:solid #fe0000;border-width:6.100px 4.700px;border-radius:2px;box-sizing:border-box;z-index:4;"></div>
<div style="left:779.9px;top:239px;width:320.8px;height:65.7px;border:2px solid #111;border-radius:5px;box-sizing:border-box;background:#fff;"></div>
<div style="left:787.1px;top:238px;width:53.1px;height:3px;background:#fff;"></div>
<span class="t" id="t63" style="left:790.6px;top:236px;font-size:12.3px;color:#707070;font-weight:400;transform:scaleX(0.9366);">Entity Id*</span>
<span class="t" id="t64" style="left:790.6px;top:268px;font-size:17.5px;color:#262626;font-weight:400;transform:scaleX(0.8248);-webkit-text-stroke:.15px #262626;">1000032</span>
<div style="left:1105px;top:239px;width:320.5px;height:65px;border:1px solid #dcdcdc;border-radius:5px;box-sizing:border-box;background:#fff;"></div>
<div style="left:1112.2px;top:238px;width:70.6px;height:3px;background:#fff;"></div>
<span class="t" id="t65" style="left:1115.7px;top:236px;font-size:12.3px;color:#707070;font-weight:400;transform:scaleX(0.9495);">Entity Name</span>
<span class="t" id="t66" style="left:1115.7px;top:268px;font-size:17.5px;color:#262626;font-weight:400;transform:scaleX(0.9042);-webkit-text-stroke:.15px #262626;">BugTesting</span>
<div style="left:779.9px;top:336.95px;width:320.8px;height:65.6px;border:1px solid #dcdcdc;border-radius:5px;box-sizing:border-box;background:#fff;"></div>
<div style="left:787.1px;top:335.95px;width:40.5px;height:3px;background:#fff;"></div>
<span class="t" id="t67" style="left:790.6px;top:334px;font-size:12.3px;color:#707070;font-weight:400;transform:scaleX(0.9606);">Status</span>
<span class="t" id="t68" style="left:790.6px;top:366px;font-size:17.5px;color:#262626;font-weight:400;transform:scaleX(0.7577);-webkit-text-stroke:.15px #262626;">ACTIVE</span>
<div style="left:1105px;top:336.95px;width:320.5px;height:65.6px;border:1px solid #dcdcdc;border-radius:5px;box-sizing:border-box;background:#fff;"></div>
<div style="left:1112.2px;top:335.95px;width:64px;height:3px;background:#fff;"></div>
<span class="t" id="t69" style="left:1115.7px;top:334px;font-size:12.3px;color:#707070;font-weight:400;transform:scaleX(0.9404);">Entity Type</span>
<span class="t" id="t70" style="left:1115.7px;top:366px;font-size:17.5px;color:#262626;font-weight:400;transform:scaleX(0.7558);-webkit-text-stroke:.15px #262626;">CORPORATE</span>
<div style="left:779.9px;top:435px;width:320.8px;height:66px;border:1px solid #dcdcdc;border-radius:5px;box-sizing:border-box;background:#fff;"></div>
<span class="t" id="t71" style="left:790.6px;top:460px;font-size:18.8px;color:#6a6a6a;font-weight:400;transform:scaleX(0.8487);">Identity Type</span>
<div style="left:1105px;top:435px;width:320.5px;height:66px;border:1px solid #dcdcdc;border-radius:5px;box-sizing:border-box;background:#fff;"></div>
<span class="t" id="t72" style="left:1115.7px;top:460px;font-size:18.8px;color:#6a6a6a;font-weight:400;transform:scaleX(0.8215);">ID Number</span>
<div style="left:779.9px;top:532.85px;width:320.8px;height:65.6px;border:1px solid #dcdcdc;border-radius:5px;box-sizing:border-box;background:#fff;"></div>
<div style="left:787.1px;top:531.85px;width:55.7px;height:3px;background:#fff;"></div>
<span class="t" id="t73" style="left:790.6px;top:530px;font-size:12.3px;color:#707070;font-weight:400;transform:scaleX(0.9761);">Currency</span>
<span class="t" id="t74" style="left:790.6px;top:562px;font-size:17.5px;color:#262626;font-weight:400;transform:scaleX(0.7380);-webkit-text-stroke:.15px #262626;">MYR</span>
<div style="left:1105px;top:532.85px;width:320.5px;height:65.6px;border:1px solid #dcdcdc;border-radius:5px;box-sizing:border-box;background:#fff;"></div>
<span class="t" id="t75" style="left:1115.7px;top:558px;font-size:18.8px;color:#6a6a6a;font-weight:400;transform:scaleX(0.7867);">GL Code</span>
<div style="left:779.9px;top:630.8px;width:320.8px;height:65.6px;border:1px solid #dcdcdc;border-radius:5px;box-sizing:border-box;background:#fff;"></div>
<div style="left:787.1px;top:629.8px;width:66.4px;height:3px;background:#fff;"></div>
<span class="t" id="t76" style="left:790.6px;top:628px;font-size:12.3px;color:#707070;font-weight:400;transform:scaleX(0.9656);">Description</span>
<span class="t" id="t77" style="left:790.6px;top:660px;font-size:17.5px;color:#262626;font-weight:400;transform:scaleX(0.8720);-webkit-text-stroke:.15px #262626;">is it fixed yet? No</span>
<div style="left:1105px;top:630.8px;width:320.5px;height:65.6px;border:1px solid #dcdcdc;border-radius:5px;box-sizing:border-box;background:#fff;"></div>
<span class="t" id="t78" style="left:1115.7px;top:655px;font-size:18.8px;color:#6a6a6a;font-weight:400;transform:scaleX(0.8154);">Email</span>
<div style="left:779.9px;top:728.75px;width:320.8px;height:65.6px;border:1px solid #dcdcdc;border-radius:5px;box-sizing:border-box;background:#fff;"></div>
<div style="left:787.1px;top:727.75px;width:85.9px;height:3px;background:#fff;"></div>
<span class="t" id="t79" style="left:790.6px;top:726px;font-size:12.3px;color:#707070;font-weight:400;transform:scaleX(0.9538);">Phone Number</span>
<span class="t" id="t80" style="left:790.6px;top:758px;font-size:17.5px;color:#262626;font-weight:400;transform:scaleX(0.7942);-webkit-text-stroke:.15px #262626;">0124574512</span>
<svg style="left:0;top:0;z-index:4" width="1440" height="900" viewBox="0 0 1440 900"><path d="M885.2 276.0 L908.7 267.0 L908.7 284.2 Z" fill="#fe0000"/><path d="M907.7 275.6 L1008.2 274.1" stroke="#fe0000" stroke-width="6.2" stroke-linecap="round"/></svg>
<svg style="left:0;top:0;z-index:4" width="1440" height="900" viewBox="0 0 1440 900"><path d="M867.3 363.2 L890.5 353.6 L890.5 371.0 Z" fill="#fe0000"/><path d="M889.5 362.3 L1034.9 356.8" stroke="#fe0000" stroke-width="6.2" stroke-linecap="round"/></svg>
<svg style="left:0;top:0;z-index:4" width="1440" height="900" viewBox="0 0 1440 900"><path d="M854.0 576.8 L877.2 568.1 L877.2 585.5 Z" fill="#fe0000"/><path d="M876.2 576.8 L985.0 576.8" stroke="#fe0000" stroke-width="6.2" stroke-linecap="round"/></svg>
<svg style="left:0;top:0;z-index:4" width="1440" height="900" viewBox="0 0 1440 900"><path d="M916.1 682.0 L939.9 672.9 L939.9 690.3 Z" fill="#fe0000"/><path d="M938.9 681.6 L1032.8 679.9" stroke="#fe0000" stroke-width="6.2" stroke-linecap="round"/></svg>
<svg style="left:0;top:0;z-index:4" width="1440" height="900" viewBox="0 0 1440 900"><path d="M871.3 774.0 L894.5 765.6 L894.5 783.0 Z" fill="#fe0000"/><path d="M893.5 774.3 L988.8 775.3" stroke="#fe0000" stroke-width="6.2" stroke-linecap="round"/></svg>
<svg style="left:0;top:0;z-index:4" width="1440" height="900" viewBox="0 0 1440 900"><path d="M1210.5 280.0 L1234.0 272.1 L1234.0 289.5 Z" fill="#fe0000"/><path d="M1233.0 280.8 L1301.0 283.2" stroke="#fe0000" stroke-width="6.2" stroke-linecap="round"/></svg>
<svg style="left:0;top:0;z-index:4" width="1440" height="900" viewBox="0 0 1440 900"><path d="M1222.5 371.2 L1245.5 362.5 L1245.5 379.9 Z" fill="#fe0000"/><path d="M1244.5 371.2 L1320.2 371.2" stroke="#fe0000" stroke-width="6.2" stroke-linecap="round"/></svg>
<div style="left:1437.2px;top:68px;width:1.3px;height:789px;background:#d0d0d0;"></div>
<div style="left:1399.1px;top:812.7px;width:5.2px;height:6.6px;border-radius:50%;background:rgba(222,243,248,0.31);"></div>
<div style="left:1414.8px;top:819.5px;width:8.8px;height:11px;border-radius:50%;background:rgba(222,243,248,0.37);"></div>
<div style="left:1419.7px;top:838.1px;width:11.4px;height:14.4px;border-radius:50%;background:rgba(222,243,248,0.43);"></div>
<div style="left:1412.7px;top:859px;width:13px;height:16.4px;border-radius:50%;background:rgba(222,243,248,0.50);"></div>
<div style="left:1396.4px;top:868.3px;width:10.6px;height:13.4px;border-radius:50%;background:rgba(222,243,248,0.50);"></div>
<div style="left:1384px;top:823.7px;width:2px;height:2.6px;border-radius:50%;background:rgba(222,243,248,0.25);"></div>
</body></html>
